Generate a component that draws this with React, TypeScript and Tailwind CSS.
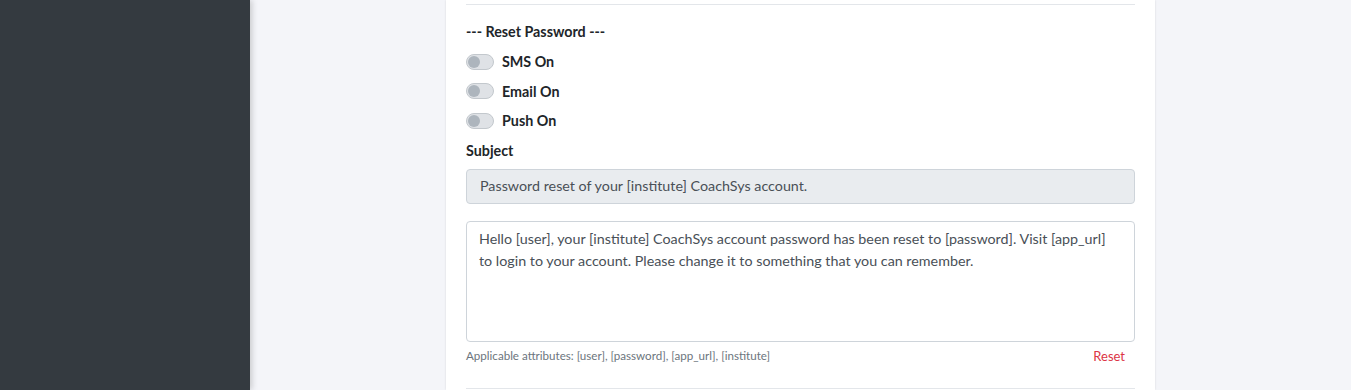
import React from "react";

const toggles = ["SMS On", "Email On", "Push On"];

function Switch({ label }: { label: string }) {
  return (
    <div className="flex h-[29.5px] items-center">
      <span className="relative h-4 w-7 shrink-0 rounded-full border border-[#c3c8cd] bg-[#dfe2e6]">
        <span className="absolute left-[1px] top-[1px] h-3 w-3 rounded-full bg-[#adb5bd]" />
      </span>
      <span className="ml-2 text-[14.3px] font-bold text-[#212529]">{label}</span>
    </div>
  );
}

export default function App() {
  return (
    <div
      className="flex h-[390px] w-full overflow-hidden bg-[#f4f5f9]"
      style={{ fontFamily: "Lato, 'Open Sans', sans-serif" }}
    >
      {/* SIDEBAR */}
      <aside className="relative z-10 w-[250px] shrink-0 bg-[#343a40] shadow-[2px_0_6px_rgba(0,0,0,0.18)]" />

      {/* MAIN */}
      <main className="flex flex-1 justify-center">
        <div className="w-[709px] bg-white px-5 shadow-[0_0_2px_rgba(0,0,0,0.12)]">
          <div className="mt-1 border-t border-[#e3e6ea]" />

          <div className="mt-4 text-[14.3px] font-bold leading-[21px] text-[#212529]">
            --- Reset Password ---
          </div>

          <div className="mt-[5px]">
            {toggles.map((t) => (
              <Switch key={t} label={t} />
            ))}
          </div>

          <div className="mt-[4px] text-[14.3px] font-bold leading-[21px] text-[#212529]">
            Subject
          </div>

          <div className="mt-[8px] flex h-[35px] items-center rounded border border-[#ced4da] bg-[#e9ecef] px-[13px] text-[14.3px] text-[#495057]">
            Password reset of your [institute] CoachSys account.
          </div>

          <textarea
            readOnly
            defaultValue="Hello [user], your [institute] CoachSys account password has been reset to [password]. Visit [app_url] to login to your account. Please change it to something that you can remember."
            className="mt-[17px] block h-[121px] w-full resize-none rounded border border-[#ced4da] bg-white px-3 py-[6px] text-[14.3px] leading-[22px] text-[#495057] outline-none"
            style={{ fontFamily: "Lato, 'Open Sans', sans-serif" }}
          />

          <div className="mt-[5px] flex items-center justify-between pr-[10px]">
            <span className="text-[11.6px] leading-[18px] text-[#6c757d]">
              Applicable attributes: [user], [password], [app_url], [institute]
            </span>
            <span className="text-[13px] leading-[18px] text-[#dc3545]">Reset</span>
          </div>

          <div className="mt-[23px] border-t border-[#e3e6ea]" />
        </div>
      </main>
    </div>
  );
}
